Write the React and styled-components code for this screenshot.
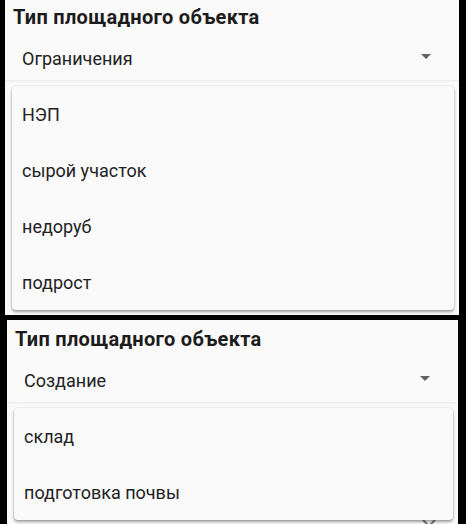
import React from 'react'
import styled, { createGlobalStyle } from 'styled-components'

const GlobalStyle = createGlobalStyle`
  html, body {
    margin: 0;
    padding: 0;
    background: #000;
    font-family: Roboto, "Noto Sans", sans-serif;
  }
  #root {
    width: 466px;
    height: 524px;
    overflow: hidden;
  }
`

const Screens = styled.div`
  display: flex;
  flex-direction: column;
  gap: 5px;
`

const Screen = styled.div`
  position: relative;
  overflow: hidden;
  margin-left: ${(p) => p.$left}px;
  width: ${(p) => p.$width}px;
  height: ${(p) => p.$height}px;
  padding-top: ${(p) => p.$offset}px;
  box-sizing: border-box;
  background: #fafafa;
`

const Title = styled.div`
  padding: 6px 0 0 8px;
  font-size: 20px;
  line-height: 22px;
  font-weight: 700;
  letter-spacing: 0.3px;
  color: #1c1c1c;
`

const SelectRow = styled.div`
  display: flex;
  align-items: center;
  justify-content: space-between;
  height: 44px;
  margin-top: 8px;
  padding: 0 28px 0 17px;
  font-size: 18px;
  color: #222;
  box-shadow: 0 1px 2px rgba(0, 0, 0, 0.08);
`

const Arrow = styled.span`
  width: 0;
  height: 0;
  border-left: 5px solid transparent;
  border-right: 5px solid transparent;
  border-top: 5px solid #616161;
  margin-top: -3px;
`

const Chevron = styled.svg`
  position: absolute;
  right: 22px;
  bottom: -4px;
`

const Menu = styled.ul`
  position: absolute;
  top: ${(p) => p.$top}px;
  left: 7px;
  right: 5px;
  margin: 0;
  padding: 0;
  list-style: none;
  background: #fafafa;
  border-radius: 4px;
  box-shadow: 0 2px 3px rgba(0, 0, 0, 0.35), 0 0 2px rgba(0, 0, 0, 0.15);
`

const MenuItem = styled.li`
  display: flex;
  align-items: center;
  height: 56px;
  padding-left: 10px;
  font-size: 18px;
  color: #222;
`

const TypeSelect = ({ value, items, left, width, height, offset, menuTop, extra }) => (
  <Screen $left={left} $width={width} $height={height} $offset={offset}>
    <Title>Тип площадного объекта</Title>
    <SelectRow>
      {value}
      <Arrow />
    </SelectRow>
    {extra}
    <Menu $top={menuTop}>
      {items.map((item) => (
        <MenuItem key={item}>{item}</MenuItem>
      ))}
    </Menu>
  </Screen>
)

export default function App() {
  return (
    <>
      <GlobalStyle />
      <Screens>
        <TypeSelect
          value="Ограничения"
          items={['НЭП', 'сырой участок', 'недоруб', 'подрост']}
          left={5}
          width={454}
          height={315}
          offset={0}
          menuTop={86}
        />
        <TypeSelect
          value="Создание"
          items={['склад', 'подготовка почвы']}
          left={7}
          width={451}
          height={204}
          offset={2}
          menuTop={88}
          extra={
            <Chevron width="14" height="9" viewBox="0 0 14 9">
              <path d="M1 1l6 6 6-6" fill="none" stroke="#757575" strokeWidth="2" />
            </Chevron>
          }
        />
      </Screens>
    </>
  )
}
